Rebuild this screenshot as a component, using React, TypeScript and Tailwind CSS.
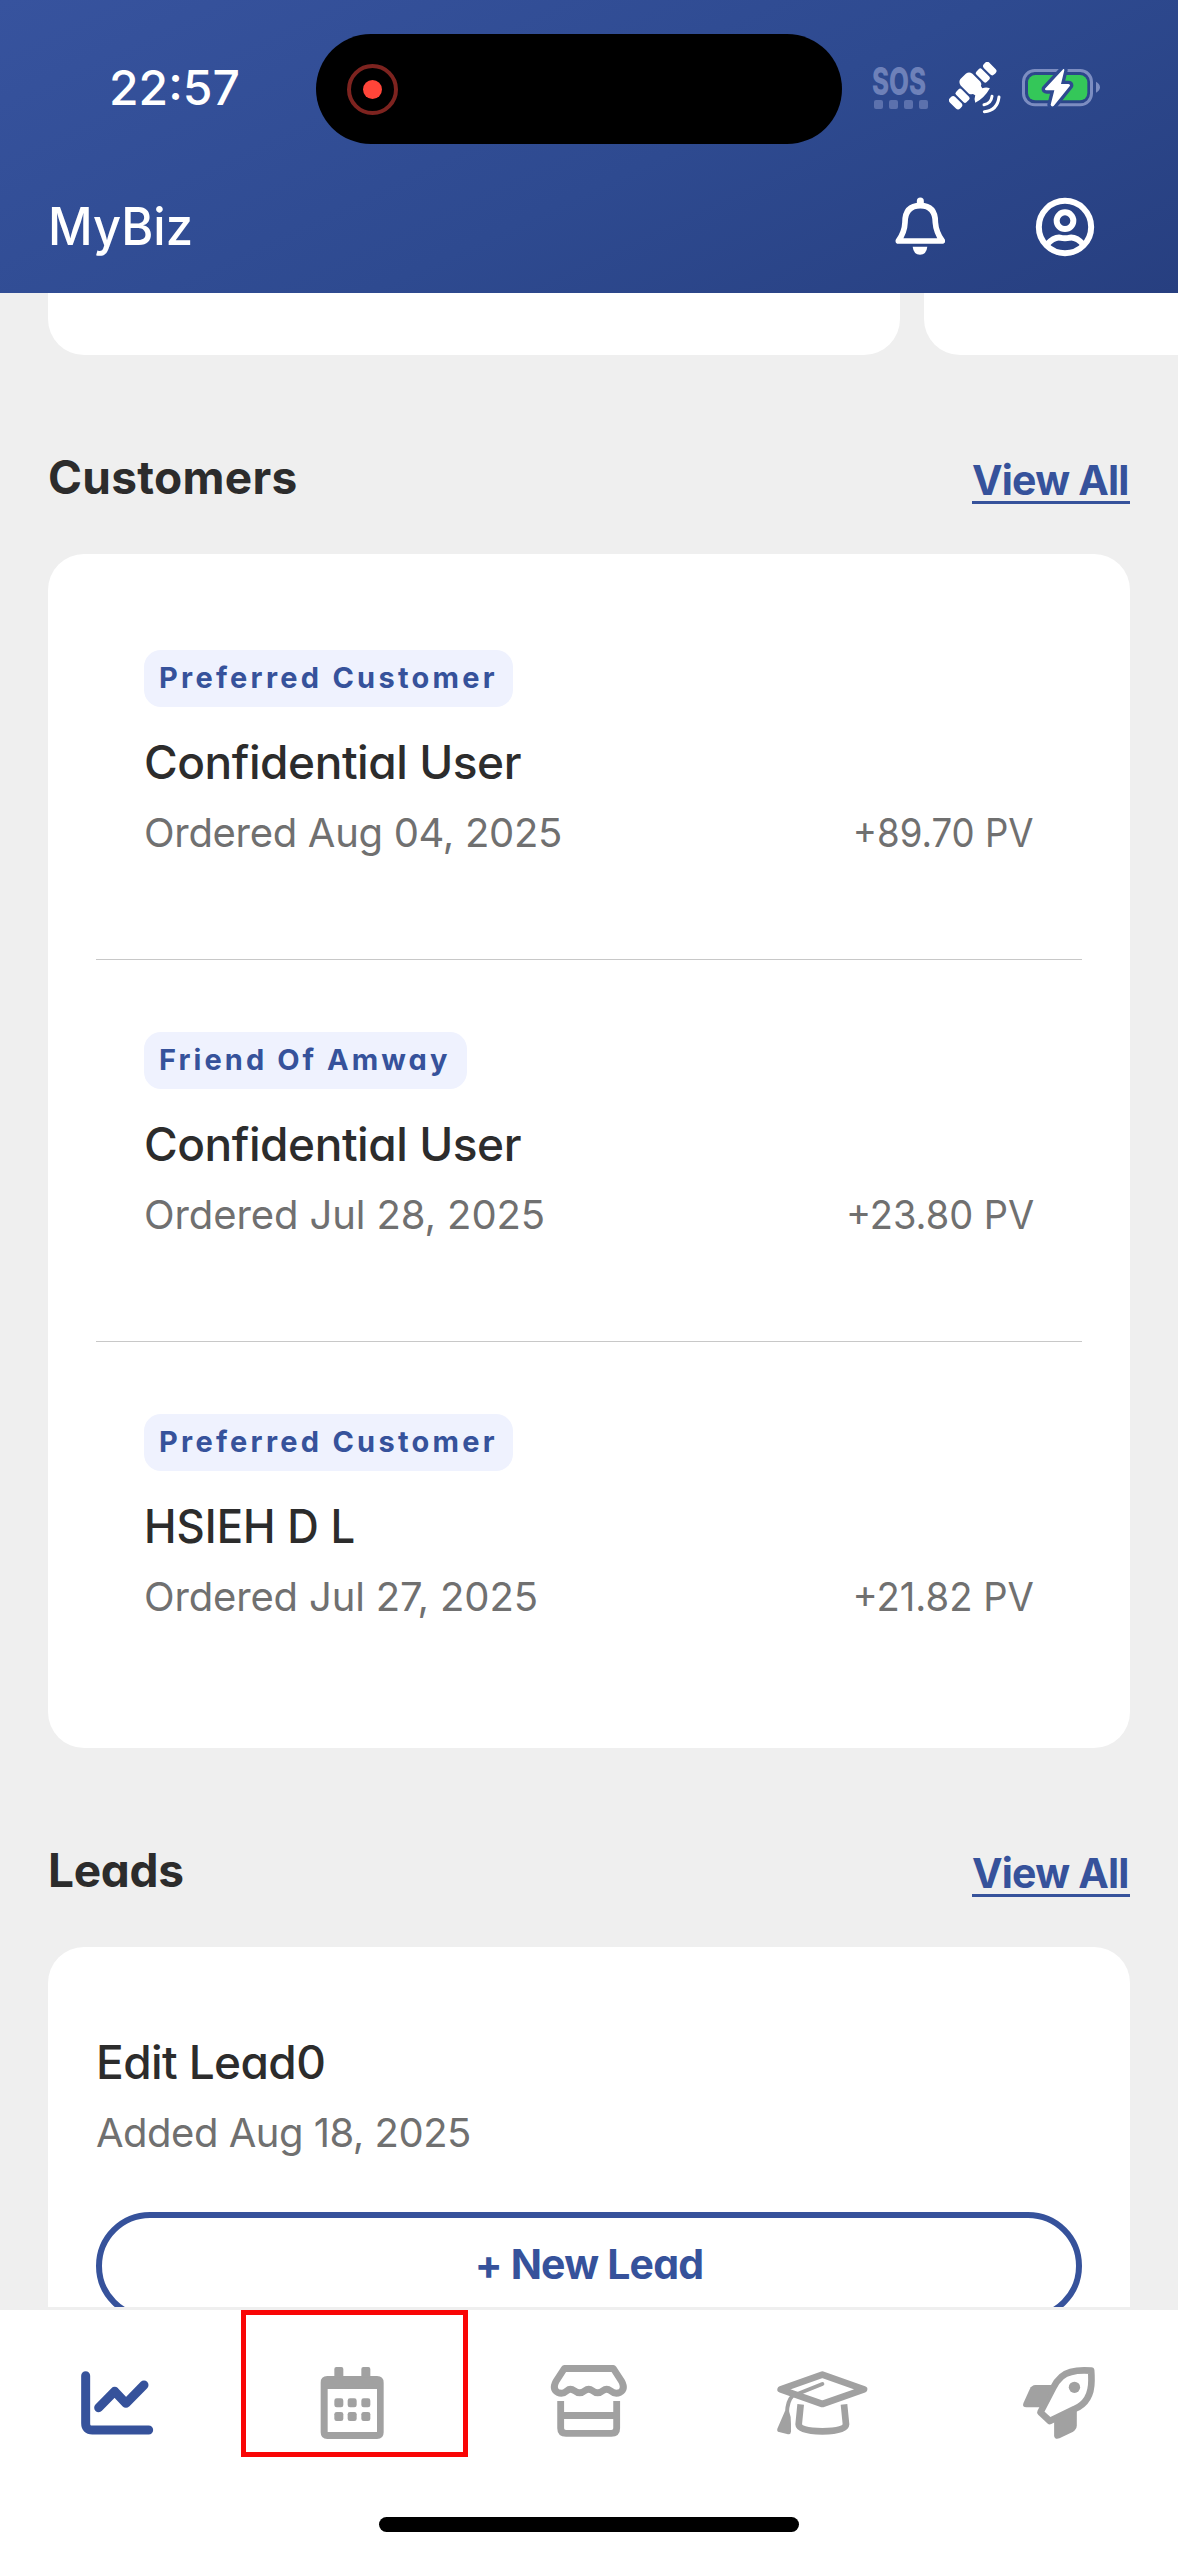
import type { ReactNode } from "react";

type Customer = {
  badge: string;
  badgeWidth: string;
  badgeSpacing: string;
  name: string;
  nameFit: string;
  ordered: string;
  orderedSpacing: string;
  pv: string;
  pvFit: string;
};

const customers: Customer[] = [
  {
    badge: "Preferred Customer",
    badgeWidth: "w-[369px]",
    badgeSpacing: "tracking-[3.25px]",
    name: "Confidential User",
    nameFit: "tracking-[-0.45px]",
    ordered: "Ordered Aug 04, 2025",
    orderedSpacing: "tracking-[-0.3px]",
    pv: "+89.70 PV",
    pvFit: "scale-x-[0.915]",
  },
  {
    badge: "Friend Of Amway",
    badgeWidth: "w-[323px]",
    badgeSpacing: "tracking-[3.05px]",
    name: "Confidential User",
    nameFit: "tracking-[-0.45px]",
    ordered: "Ordered Jul 28, 2025",
    orderedSpacing: "tracking-[-0.1px]",
    pv: "+23.80 PV",
    pvFit: "scale-x-[0.95]",
  },
  {
    badge: "Preferred Customer",
    badgeWidth: "w-[369px]",
    badgeSpacing: "tracking-[3.25px]",
    name: "HSIEH D L",
    nameFit: "origin-left scale-x-[0.95]",
    ordered: "Ordered Jul 27, 2025",
    orderedSpacing: "tracking-[-0.15px]",
    pv: "+21.82 PV",
    pvFit: "scale-x-[0.955]",
  },
];

function Satellite() {
  return (
    <svg viewBox="447 186 156 156" className="size-[52px] shrink-0">
      <g transform="translate(518 257) rotate(-45)" fill="white">
        <rect x="61" y="-22" width="23" height="44" rx="9" />
        <rect x="31.500" y="-22" width="23" height="44" rx="6" />
        <rect x="-84" y="-22" width="23" height="44" rx="9" />
        <rect x="-54.500" y="-22" width="23" height="44" rx="6" />
        <path d="M-12 -40H12Q23 -38 25 -26V8Q24 15 17 18L15 26Q26 31 31 42Q0 51 -31 42Q-26 31 -15 26L-17 18Q-24 15 -25 8V-26Q-23 -38 -12 -40Z" />
      </g>
      <g fill="none" stroke="white" strokeWidth="9" strokeLinecap="round">
        <path d="M576 289Q573 311 552 314" />
        <path d="M597 291Q592 332 553 335" />
      </g>
    </svg>
  );
}

function Battery() {
  const bolt =
    "M790 207L735 266Q734 271 740 271H763L752 314Q754 322 761 318L810 257Q811 252 805 252H783L793 211Q793 206 790 207Z";
  return (
    <svg viewBox="666 204 237 120" className="h-[40px] w-[79px] shrink-0">
      <rect x="670.5" y="211.5" width="204" height="103" rx="34" fill="none" stroke="#7c8dc1" strokeWidth="9" />
      <path d="M888 245Q900 252 900 262Q900 272 888 278Z" fill="#7c8dc1" />
      <rect x="684" y="225" width="178" height="76" rx="22" fill="#34c759" />
      <path d={bolt} fill="none" stroke="#2e4a90" strokeWidth="20" strokeLinejoin="round" />
      <path d={bolt} fill="white" />
    </svg>
  );
}

function Bell() {
  return (
    <svg viewBox="285 592 150 180" className="h-[60px] w-[50px]">
      <path d="M361 604V612" stroke="white" strokeWidth="21" strokeLinecap="round" />
      <path
        d="M295 724Q314 697 315 668Q315 618 361 618Q406 618 406 668Q408 697 427 724Z"
        fill="none"
        stroke="white"
        strokeWidth="17"
        strokeLinejoin="round"
      />
      <path d="M338 741H382Q379 765 360 765Q341 765 338 741Z" fill="white" />
    </svg>
  );
}

function Profile() {
  return (
    <svg viewBox="705 595 180 180" className="size-[60px]">
      <g fill="none" stroke="white" strokeWidth="18">
        <circle cx="795" cy="685" r="78.5" />
        <circle cx="795" cy="666" r="25" />
        <path d="M739 739Q762 715 780 717Q795 721 810 717Q830 715 851 739" />
      </g>
    </svg>
  );
}

const gray = "#a1a1a1";

function ChartIcon() {
  return (
    <svg viewBox="219 204 270 270" className="size-[90px]">
      <g fill="none" stroke="#36529b" strokeWidth="27" strokeLinecap="round" strokeLinejoin="round">
        <path d="M257 257V400Q257 420 277 420H446" />
        <path d="M296 353L344 304L378 340L432 285" />
      </g>
    </svg>
  );
}

function CalendarIcon() {
  return (
    <svg viewBox="925 204 270 270" className="size-[90px]" fill={gray}>
      <path
        fillRule="evenodd"
        d="M983 258H1132Q1152 258 1152 278V427Q1152 447 1132 447H983Q963 447 963 427V278Q963 258 983 258ZM984 297V426H1132V297Z"
      />
      <path d="M1004 262V237Q1004 231 1010 231H1025Q1031 231 1031 237V262ZM1085 262V237Q1085 231 1091 231H1106Q1112 231 1112 237V262Z" />
      {[325, 366].map((y) =>
        [1004, 1044, 1085].map((x) => <rect key={`${x}-${y}`} x={x} y={y} width="27" height="27" rx="7" />),
      )}
    </svg>
  );
}

function StoreIcon() {
  return (
    <svg viewBox="192 204 270 270" className="size-[90px]">
      <g fill="none" stroke={gray} strokeWidth="20.5" strokeLinejoin="round">
        <path d="M253 235.500H400L425 274Q437 297 420 307Q405 314 391 302Q380 293 369 302Q353 315 337 302Q326 293 315 302Q299 315 283 302Q271 293 261 302Q248 314 233 307Q216 297 228 274Z" />
        <path d="M242 333V415Q242 430 258 430H394Q410 430 410 415V333M242 376.500H410" />
      </g>
    </svg>
  );
}

function GraduationIcon() {
  return (
    <svg viewBox="899 204 270 270" className="size-[90px] overflow-visible">
      <g fill="none" stroke={gray} strokeWidth="20" strokeLinejoin="round">
        <path d="M901 298L1026 254L1151 298L1026 342Z" />
        <path d="M961 343L955 403Q956 423 1026 424Q1096 423 1097 403L1091 343" />
        <path d="M1026 282L936 318Q921 334 920 368" strokeWidth="12" strokeLinecap="round" />
      </g>
      <path d="M914 363L891 416Q889 424 896 426L923 433Q931 434 932 425V402Q933 380 926 363Z" fill={gray} />
    </svg>
  );
}

function RocketIcon() {
  return (
    <svg viewBox="411.600 504 270 270" className="size-[90px]" fill={gray}>
      <path
        d="M640 542Q578 537 551 560Q536 573 527 592L488 667L516 693L590 657Q641 636 641 572Q641 552 640 542Z"
        fill="none"
        stroke={gray}
        strokeWidth="20"
        strokeLinejoin="round"
      />
      <path d="M524 585H473Q461 586 456 597L437 639Q432 652 446 652H494Z" />
      <path d="M529 688V738Q531 750 545 745L586 725Q597 718 597 706V655Z" />
      <circle cx="590" cy="592" r="17" />
    </svg>
  );
}

function Section({ title, titleSpacing, children }: { title: string; titleSpacing: string; children: ReactNode }) {
  return (
    <section>
      <div className="flex h-[199px] items-start justify-between px-12 pt-[92px]">
        <h2 className={`text-[46px] leading-[60px] font-bold text-[#2c2c2c] ${titleSpacing}`}>{title}</h2>
        <a className="mt-[9px] h-[48px] w-[158px] border-b-[3px] border-[#36529b] text-[41px] leading-[48px] font-bold tracking-[-0.8px] whitespace-nowrap text-[#36529b]">
          View All
        </a>
      </div>
      <div className="mx-12 rounded-[36px] bg-white">{children}</div>
    </section>
  );
}

function CustomerRow({ c, last }: { c: Customer; last: boolean }) {
  return (
    <div className={`h-[382px] border-b px-12 pt-[72px] ${last ? "border-transparent" : "border-[#c8c8c8]"}`}>
      <div
        className={`flex h-[57px] items-center rounded-[17px] bg-[#eff2fe] pb-[2px] pl-[15px] text-[29px] font-bold whitespace-nowrap text-[#36529b] ${c.badgeWidth} ${c.badgeSpacing}`}
      >
        {c.badge}
      </div>
      <p className={`mt-[26px] text-[46px] leading-[59px] font-medium text-[#2c2c2c] ${c.nameFit}`}>{c.name}</p>
      <div className="mt-[11px] flex justify-between text-[40px] leading-[59px] text-[#707070]">
        <span className={c.orderedSpacing}>{c.ordered}</span>
        <span className={`origin-right ${c.pvFit}`}>{c.pv}</span>
      </div>
    </div>
  );
}

export default function App() {
  return (
    <div className="flex h-[2556px] w-[1178px] flex-col overflow-hidden bg-[#efefef] font-['Inter','Liberation_Sans',sans-serif] [font-feature-settings:'cv11']">
      <header className="h-[293px] shrink-0 bg-[linear-gradient(155deg,#37539e_0%,#2e4a90_55%,#273f80_100%)] text-white">
        <div className="flex h-[160px] items-center pt-[18px]">
          <div className="w-[316px] shrink-0 pb-[2px] pl-[109px] text-[48px] font-medium">22:57</div>
          <div className="flex h-[110px] w-[526px] shrink-0 items-center rounded-full bg-black pl-[31px]">
            <div className="flex size-[51px] items-center justify-center rounded-full border-4 border-[#7d231f]">
              <div className="size-[19px] rounded-full bg-[#ff4539]" />
            </div>
          </div>
          <div className="flex flex-1 items-center pb-[3px] pl-[30px]">
            <div className="w-[57px] shrink-0 text-[#6e81b9]">
              <div className="h-[34px] w-[82px] origin-left scale-x-[0.68] text-[38px] leading-[30px] font-extrabold">
                SOS
              </div>
              <div className="flex justify-between pr-px pl-[2px]">
                {[0, 1, 2, 3].map((i) => (
                  <span key={i} className="size-[9px] rounded-[2px] bg-[#5c71ad]" />
                ))}
              </div>
            </div>
            <div className="ml-5 flex items-center gap-[21px]">
              <Satellite />
              <Battery />
            </div>
          </div>
        </div>
        <div className="flex h-[133px] items-center justify-between pr-[83px] pl-12">
          <h1 className="origin-left scale-x-[0.94] text-[52px] font-medium">MyBiz</h1>
          <div className="flex items-center gap-[90px]">
            <Bell />
            <Profile />
          </div>
        </div>
      </header>

      <main className="h-[2014px] shrink-0 overflow-hidden">
        <div className="flex h-[62px] gap-6 pl-12">
          <div className="w-[852px] shrink-0 rounded-b-[36px] bg-white" />
          <div className="w-[852px] shrink-0 rounded-b-[36px] bg-white" />
        </div>

        <Section title="Customers" titleSpacing="tracking-[0.3px]">
          <div className="px-12 py-6">
            {customers.map((c, i) => (
              <CustomerRow key={c.ordered} c={c} last={i === customers.length - 1} />
            ))}
          </div>
        </Section>

        <Section title="Leads" titleSpacing="tracking-[-0.3px]">
          <div className="h-[460px] px-12 pt-[86px]">
            <p className="text-[46px] leading-[59px] font-medium tracking-[-0.6px] text-[#2c2c2c]">Edit Lead0</p>
            <p className="mt-[11px] text-[40px] leading-[59px] tracking-[-0.5px] text-[#707070]">Added Aug 18, 2025</p>
            <button className="mt-[50px] flex h-[108px] w-full items-center justify-center rounded-full border-[6px] border-[#36529b] pb-[3px] text-[41px] font-bold tracking-[-0.8px] text-[#36529b]">
              + New Lead
            </button>
          </div>
        </Section>
      </main>

      <nav className="flex h-[249px] shrink-0 flex-col border-t-[3px] border-[#efefef] bg-white">
        <div className="grid h-[207px] grid-cols-5 justify-items-center">
          <div className="pt-12"><ChartIcon /></div>
          <div className="relative w-full">
            <div className="flex justify-center pt-12"><CalendarIcon /></div>
            <div className="absolute top-0 left-[5px] h-[147px] w-[227px] border-[5px] border-[#f90606]" />
          </div>
          <div className="pt-12"><StoreIcon /></div>
          <div className="pt-12"><GraduationIcon /></div>
          <div className="pt-12"><RocketIcon /></div>
        </div>
        <div className="mx-auto h-[15px] w-[420px] rounded-full bg-black" />
      </nav>
    </div>
  );
}
